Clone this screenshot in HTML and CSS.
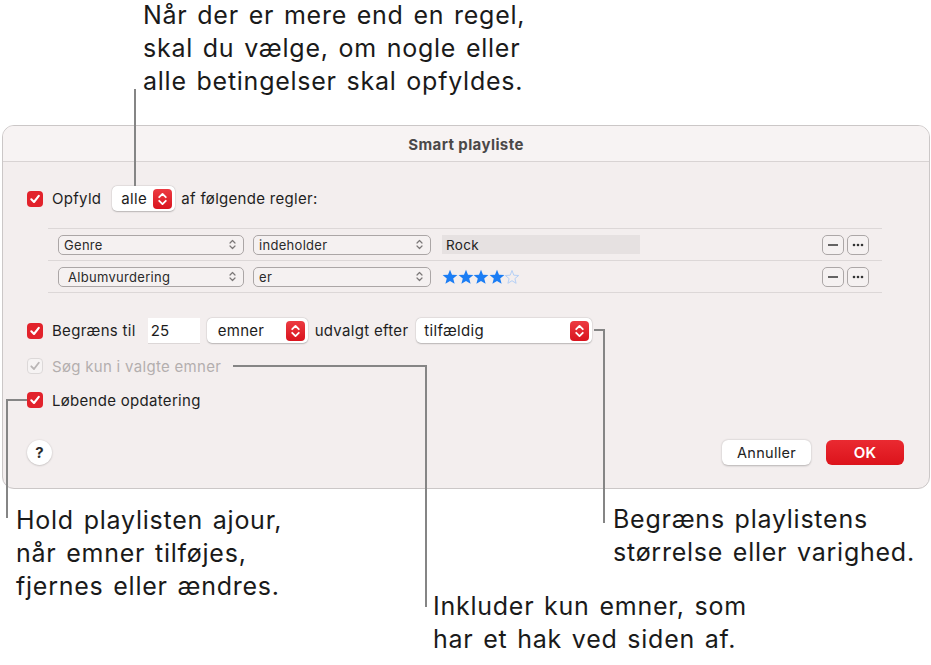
FILE: index.html
```html
<!DOCTYPE html>
<html>
<head>
<meta charset="utf-8">
<link rel="stylesheet" href="styles.css">
</head>
<body>
<div class="callout callout-top">Når der er mere end en regel,<br>skal du vælge, om nogle eller<br>alle betingelser skal opfyldes.</div>

<div class="dialog">
  <div class="titlebar">Smart playliste</div>
  <div class="content">
    <div class="row row-match">
      <span class="cb"><svg viewBox="0 0 16 16" width="16" height="16"><rect x="0" y="0" width="16" height="16" rx="4" fill="#e2222b"/><path d="M4.3 8.3 L7 11 L11.8 4.8" fill="none" stroke="#fff" stroke-width="2.1" stroke-linecap="round" stroke-linejoin="round"/></svg></span>
      <span class="label">Opfyld</span>
      <span class="popup popup-alle"><span class="ptext">alle</span><span class="stepper"><svg viewBox="0 0 19 20" width="19" height="20"><path d="M6.2 8.2 L9.5 4.9 L12.8 8.2 M6.2 11.8 L9.5 15.1 L12.8 11.8" fill="none" stroke="#fff" stroke-width="1.8" stroke-linecap="round" stroke-linejoin="round"/></svg></span></span>
      <span class="label">af følgende regler:</span>
    </div>

    <div class="rules">
      <div class="rule">
        <span class="gpop gpop-field"><span class="gtext">Genre</span><svg class="chev" viewBox="0 0 7 11" width="7" height="11"><path d="M1 4 L3.5 1.5 L6 4 M1 7 L3.5 9.5 L6 7" fill="none" stroke="#7c7878" stroke-width="1.2" stroke-linecap="round" stroke-linejoin="round"/></svg></span>
        <span class="gpop gpop-op"><span class="gtext">indeholder</span><svg class="chev" viewBox="0 0 7 11" width="7" height="11"><path d="M1 4 L3.5 1.5 L6 4 M1 7 L3.5 9.5 L6 7" fill="none" stroke="#7c7878" stroke-width="1.2" stroke-linecap="round" stroke-linejoin="round"/></svg></span>
        <span class="field">Rock</span>
        <span class="spacer"></span>
        <span class="sbtn"><svg viewBox="0 0 22 20" width="22" height="20"><path d="M6 10 H16" stroke="#333" stroke-width="1.6"/></svg></span>
        <span class="sbtn"><svg viewBox="0 0 22 20" width="22" height="20"><circle cx="7" cy="10" r="1.3" fill="#333"/><circle cx="11" cy="10" r="1.3" fill="#333"/><circle cx="15" cy="10" r="1.3" fill="#333"/></svg></span>
      </div>
      <div class="rule">
        <span class="gpop gpop-field gpop-indent"><span class="gtext">Albumvurdering</span><svg class="chev" viewBox="0 0 7 11" width="7" height="11"><path d="M1 4 L3.5 1.5 L6 4 M1 7 L3.5 9.5 L6 7" fill="none" stroke="#7c7878" stroke-width="1.2" stroke-linecap="round" stroke-linejoin="round"/></svg></span>
        <span class="gpop gpop-op"><span class="gtext">er</span><svg class="chev" viewBox="0 0 7 11" width="7" height="11"><path d="M1 4 L3.5 1.5 L6 4 M1 7 L3.5 9.5 L6 7" fill="none" stroke="#7c7878" stroke-width="1.2" stroke-linecap="round" stroke-linejoin="round"/></svg></span>
        <span class="stars">
          <svg viewBox="0 0 16 16" width="16" height="16"><polygon points="8,0.8 10,5.8 15.4,6.1 11.2,9.5 12.6,14.8 8,11.9 3.4,14.8 4.8,9.5 0.6,6.1 6,5.8" fill="#1b7df4"/></svg>
          <svg viewBox="0 0 16 16" width="16" height="16"><polygon points="8,0.8 10,5.8 15.4,6.1 11.2,9.5 12.6,14.8 8,11.9 3.4,14.8 4.8,9.5 0.6,6.1 6,5.8" fill="#1b7df4"/></svg>
          <svg viewBox="0 0 16 16" width="16" height="16"><polygon points="8,0.8 10,5.8 15.4,6.1 11.2,9.5 12.6,14.8 8,11.9 3.4,14.8 4.8,9.5 0.6,6.1 6,5.8" fill="#1b7df4"/></svg>
          <svg viewBox="0 0 16 16" width="16" height="16"><polygon points="8,0.8 10,5.8 15.4,6.1 11.2,9.5 12.6,14.8 8,11.9 3.4,14.8 4.8,9.5 0.6,6.1 6,5.8" fill="#1b7df4"/></svg>
          <svg viewBox="0 0 16 16" width="16" height="16"><polygon points="8,1.5 9.8,6.2 14.7,6.5 10.9,9.6 12.1,14.3 8,11.7 3.9,14.3 5.1,9.6 1.3,6.5 6.2,6.2" fill="none" stroke="#b5d0f6" stroke-width="1"/></svg>
        </span>
        <span class="spacer"></span>
        <span class="sbtn"><svg viewBox="0 0 22 20" width="22" height="20"><path d="M6 10 H16" stroke="#333" stroke-width="1.6"/></svg></span>
        <span class="sbtn"><svg viewBox="0 0 22 20" width="22" height="20"><circle cx="7" cy="10" r="1.3" fill="#333"/><circle cx="11" cy="10" r="1.3" fill="#333"/><circle cx="15" cy="10" r="1.3" fill="#333"/></svg></span>
      </div>
    </div>

    <div class="row row-limit">
      <span class="cb"><svg viewBox="0 0 16 16" width="16" height="16"><rect x="0" y="0" width="16" height="16" rx="4" fill="#e2222b"/><path d="M4.3 8.3 L7 11 L11.8 4.8" fill="none" stroke="#fff" stroke-width="2.1" stroke-linecap="round" stroke-linejoin="round"/></svg></span>
      <span class="label">Begræns til</span>
      <span class="numfield">25</span>
      <span class="popup popup-emner"><span class="ptext">emner</span><span class="stepper"><svg viewBox="0 0 19 20" width="19" height="20"><path d="M6.2 8.2 L9.5 4.9 L12.8 8.2 M6.2 11.8 L9.5 15.1 L12.8 11.8" fill="none" stroke="#fff" stroke-width="1.8" stroke-linecap="round" stroke-linejoin="round"/></svg></span></span>
      <span class="label label-after">udvalgt efter</span>
      <span class="popup popup-tilf"><span class="ptext">tilfældig</span><span class="stepper"><svg viewBox="0 0 19 20" width="19" height="20"><path d="M6.2 8.2 L9.5 4.9 L12.8 8.2 M6.2 11.8 L9.5 15.1 L12.8 11.8" fill="none" stroke="#fff" stroke-width="1.8" stroke-linecap="round" stroke-linejoin="round"/></svg></span></span>
    </div>

    <div class="row row-sog">
      <span class="cb"><svg viewBox="0 0 16 16" width="16" height="16"><rect x="0.5" y="0.5" width="15" height="15" rx="3.5" fill="#f6f3f3" stroke="#dcd8d8"/><path d="M4.3 8.3 L7 11 L11.8 4.8" fill="none" stroke="#b9b5b5" stroke-width="1.8" stroke-linecap="round" stroke-linejoin="round"/></svg></span>
      <span class="label label-disabled">Søg kun i valgte emner</span>
    </div>

    <div class="row row-lob">
      <span class="cb"><svg viewBox="0 0 16 16" width="16" height="16"><rect x="0" y="0" width="16" height="16" rx="4" fill="#e2222b"/><path d="M4.3 8.3 L7 11 L11.8 4.8" fill="none" stroke="#fff" stroke-width="2.1" stroke-linecap="round" stroke-linejoin="round"/></svg></span>
      <span class="label">Løbende opdatering</span>
    </div>

    <div class="footer">
      <span class="help">?</span>
      <span class="spacer"></span>
      <span class="btn btn-cancel">Annuller</span>
      <span class="btn btn-ok">OK</span>
    </div>
  </div>
</div>

<div class="callout callout-left">Hold playlisten ajour,<br>når emner tilføjes,<br>fjernes eller ændres.</div>
<div class="callout callout-right">Begræns playlistens<br>størrelse eller varighed.</div>
<div class="callout callout-mid">Inkluder kun emner, som<br>har et hak ved siden af.</div>

<div class="lead lead-top"></div>
<div class="lead lead-right-h"></div>
<div class="lead lead-right-v"></div>
<div class="lead lead-mid-h"></div>
<div class="lead lead-mid-v"></div>
<div class="lead lead-left-h"></div>
<div class="lead lead-left-v"></div>
</body>
</html>
```

FILE: styles.css
```css
* { box-sizing: border-box; }
html, body { margin: 0; padding: 0; }
body {
  position: relative;
  width: 931px;
  height: 665px;
  background: #ffffff;
  font-family: "Inter", "Liberation Sans", sans-serif;
  color: #1c1c1c;
  overflow: hidden;
}

.callout {
  position: absolute;
  font-size: 25px;
  line-height: 33px;
  color: #1a1a1a;
  white-space: nowrap;
  letter-spacing: 0.75px;
  word-spacing: 2px;
}
.callout-top { left: 143px; top: -1px; }
.callout-left { left: 16px; top: 504px; }
.callout-right { left: 613px; top: 503px; }
.callout-mid { left: 433px; top: 590px; }

.lead { position: absolute; background: #858585; }
.lead-top { left: 134px; top: 89px; width: 2px; height: 97px; }
.lead-right-h { left: 594px; top: 329px; width: 11px; height: 2px; }
.lead-right-v { left: 603px; top: 329px; width: 2px; height: 194px; }
.lead-mid-h { left: 233px; top: 365px; width: 194px; height: 2px; }
.lead-mid-v { left: 425px; top: 365px; width: 2px; height: 242px; }
.lead-left-h { left: 6px; top: 399px; width: 21px; height: 2px; }
.lead-left-v { left: 6px; top: 399px; width: 2px; height: 119px; }

.dialog {
  margin: 125px 0 0 2px;
  width: 928px;
  border: 1px solid #cbc7c7;
  border-radius: 12px;
  background: #f3eeee;
  overflow: hidden;
}
.titlebar {
  height: 36px;
  background: #f7f3f3;
  border-bottom: 1px solid #d8d3d3;
  display: flex;
  align-items: center;
  justify-content: center;
  font-weight: 700;
  font-size: 15px;
  letter-spacing: 0.4px;
  color: #4b4848;
  padding-top: 1px;
}
.content {
  padding: 24px 24px 23px 24px;
  font-size: 15px;
  letter-spacing: 0.3px;
}
.row {
  display: flex;
  align-items: center;
}
.cb { width: 16px; height: 16px; display: block; flex: none; }
.cb svg { display: block; }
.label { margin-left: 9px; white-space: nowrap; color: #1e1e1e; }
.label-disabled { color: #b3aeae; }

.row-match { height: 25px; }
.row-match .popup-alle { margin-left: 11px; width: 63px; margin-right: 6px; }
.row-match .popup-alle + .label { margin-left: 0; }

.popup {
  display: flex;
  align-items: center;
  height: 25px;
  background: #ffffff;
  border-radius: 5px;
  box-shadow: 0 0.5px 1.5px rgba(0,0,0,0.22), 0 0 0 0.5px rgba(0,0,0,0.06);
  padding: 0 3px 0 9px;
  flex: none;
}
.ptext { flex: 1; white-space: nowrap; }
.stepper {
  width: 19px;
  height: 20px;
  border-radius: 4px;
  background: linear-gradient(#ec3b42, #d9141e);
  display: block;
  flex: none;
}
.stepper svg { display: block; }

.rules {
  margin: 17px 23px 0 21px;
  border-top: 1px solid #dcd7d7;
}
.rule {
  height: 32px;
  border-bottom: 1px solid #dcd7d7;
  display: flex;
  align-items: center;
  padding: 0 13px 0 10px;
  font-size: 13px;
  letter-spacing: 0.3px;
}
.gpop {
  display: flex;
  align-items: center;
  height: 20px;
  border: 1px solid #aba6a6;
  border-radius: 5px;
  background: #f5f1f1;
  padding: 0 7px 0 5px;
  flex: none;
  color: #2a2a2a;
}
.gpop-indent { padding-left: 9px; }
.gtext { flex: 1; white-space: nowrap; }
.chev { display: block; }
.gpop-field { width: 186px; }
.gpop-op { width: 178px; margin-left: 9px; }
.field {
  margin-left: 11px;
  width: 198px;
  height: 19px;
  background: #e6e1e1;
  display: flex;
  align-items: center;
  padding-left: 4px;
  color: #222;
  font-size: 13.5px;
}
.stars { margin-left: 11px; display: flex; }
.stars svg { display: block; margin-right: -0.4px; }
.spacer { flex: 1; }
.sbtn {
  width: 22px;
  height: 20px;
  border: 1px solid #aca7a7;
  border-radius: 5px;
  background: #f5f1f1;
  display: flex;
  align-items: center;
  justify-content: center;
  margin-left: 3px;
  overflow: hidden;
}
.sbtn svg { display: block; flex: none; }

.row-limit { margin-top: 25px; height: 25px; }
.numfield {
  margin-left: 12px;
  width: 52px;
  height: 25px;
  background: #ffffff;
  box-shadow: 0 1px 0 #dcd7d7;
  display: flex;
  align-items: center;
  padding-left: 3px;
  flex: none;
}
.popup-emner { margin-left: 7px; width: 101px; padding-left: 11px; }
.label-after { margin-left: 7px; }
.popup-tilf { margin-left: 8px; width: 176px; padding-left: 8px; }

.row-sog { margin-top: 13px; height: 20px; }
.row-lob { margin-top: 14px; height: 20px; }

.footer {
  margin-top: 30px;
  height: 25px;
  display: flex;
  align-items: center;
  padding-right: 1px;
}
.help {
  width: 25px;
  height: 25px;
  border-radius: 50%;
  background: #ffffff;
  box-shadow: 0 0.5px 2px rgba(0,0,0,0.25);
  display: flex;
  align-items: center;
  justify-content: center;
  font-weight: 700;
  font-size: 15px;
  letter-spacing: 0;
  color: #2a2a2a;
}
.btn {
  height: 25px;
  border-radius: 6px;
  display: flex;
  align-items: center;
  justify-content: center;
  font-size: 14.5px;
}
.btn-cancel {
  width: 89px;
  background: #ffffff;
  box-shadow: 0 0.5px 2px rgba(0,0,0,0.25);
  color: #222;
}
.btn-ok {
  width: 78px;
  margin-left: 15px;
  background: linear-gradient(#ea2a31, #dc131b);
  color: #ffffff;
  font-weight: 600;
  font-size: 15px;
}
```
